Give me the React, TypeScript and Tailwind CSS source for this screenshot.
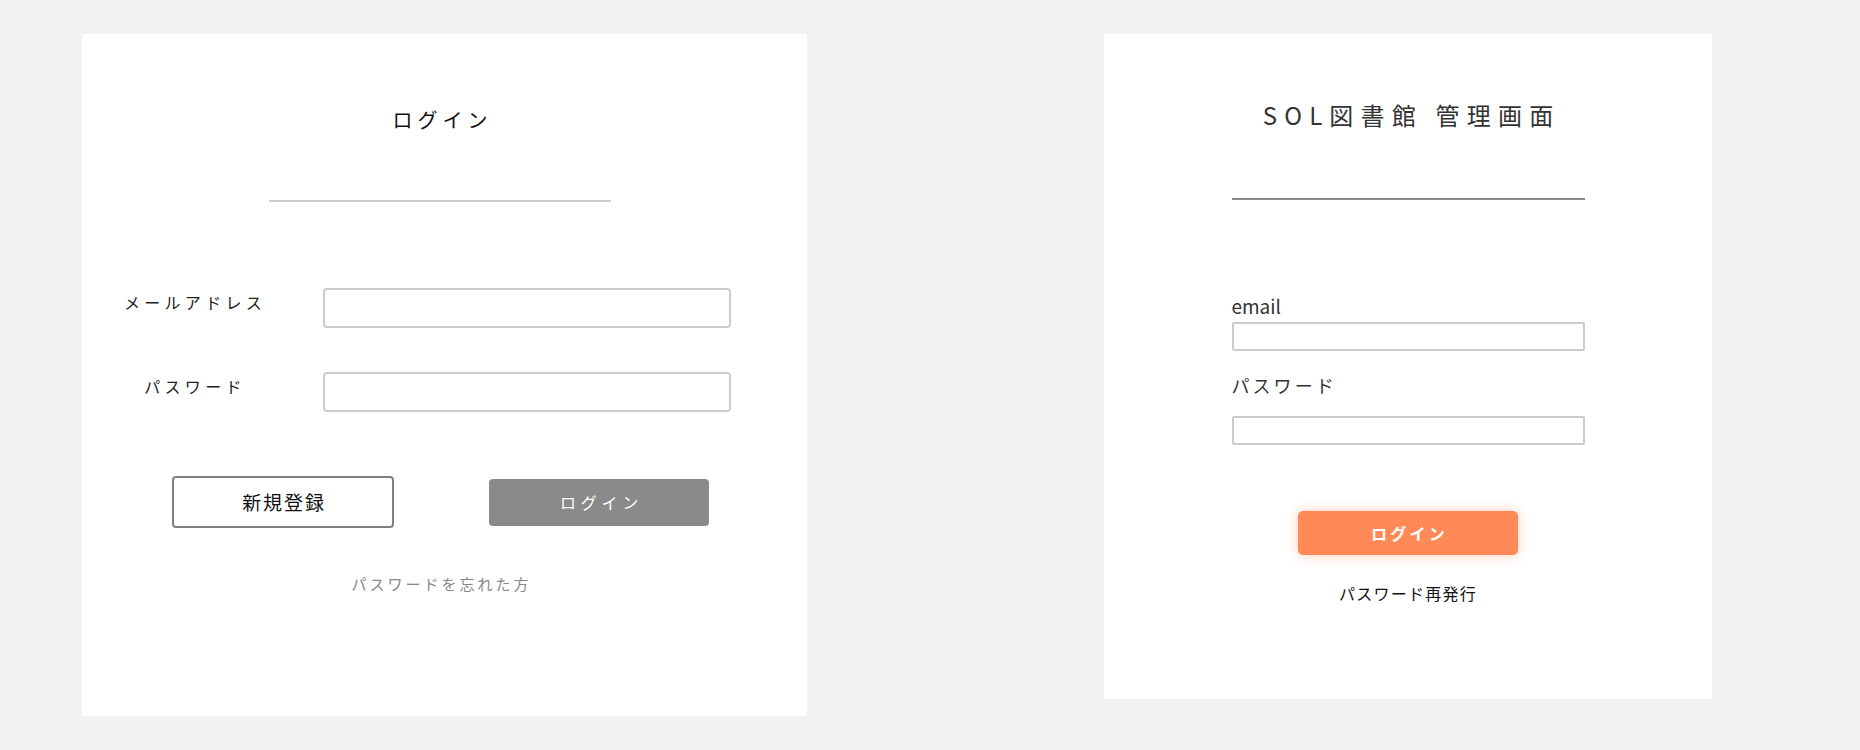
import React from "react";

const jp = "font-['Noto_Sans_CJK_JP',sans-serif]";

// Left: user login card
const UserLogin: React.FC = () => (
  <div className="flex h-[682px] w-[725px] flex-col bg-white pr-[9px] pt-[71px]">
    <h1 className="text-center text-[20px] leading-[30px] tracking-[0.25em] text-[#111] pl-[5px]">
      ログイン
    </h1>
    <div className="mx-auto mt-[65px] h-[2px] w-[342px] bg-[#cccccc]" />

    <div className="mt-[86px] flex flex-col gap-[44px]">
      <div className="flex items-start">
        <label className="ml-[31px] w-[160px] text-center text-[16px] leading-[28px] tracking-[0.27em] text-[#222] pl-[4px]">
          メールアドレス
        </label>
        <input
          type="email"
          className="ml-[50px] h-[40px] w-[408px] rounded-[4px] border-2 border-[#cccccc] bg-white outline-none"
        />
      </div>
      <div className="flex items-start">
        <label className="ml-[31px] w-[160px] text-center text-[16px] leading-[28px] tracking-[0.27em] text-[#222] pl-[4px]">
          パスワード
        </label>
        <input
          type="password"
          className="ml-[50px] h-[40px] w-[408px] rounded-[4px] border-2 border-[#cccccc] bg-white outline-none"
        />
      </div>
    </div>

    <div className="mt-[64px] flex items-center gap-[95px] pl-[90px]">
      <button className="h-[52px] w-[222px] rounded-[4px] border-2 border-[#808080] bg-white text-[19px] tracking-[0.1em] text-[#111] pl-[2px]">
        新規登録
      </button>
      <button className="h-[47px] w-[220px] rounded-[4px] bg-[#8a8a8a] text-[16px] tracking-[0.3em] text-white pl-[5px]">
        ログイン
      </button>
    </div>

    <p className="mt-[44px] text-center text-[15px] leading-[24px] tracking-[0.2em] text-[#888] pl-[3px]">
      パスワードを忘れた方
    </p>
  </div>
);

// Right: admin login card
const AdminLogin: React.FC = () => (
  <div className="flex h-[665px] w-[608px] flex-col items-center bg-white pt-[65px]">
    <h1 className="text-[24px] leading-[32px] tracking-[0.3em] text-[#333] pl-[7px]">
      SOL図書館 管理画面
    </h1>
    <div className="mt-[67px] h-[2px] w-[353px] bg-[#8a8a8a]" />

    <div className="mt-[94px] flex w-[353px] flex-col">
      <label className="text-[19px] leading-[24px] text-[#333]">email</label>
      <input
        type="email"
        className="mt-[4px] h-[29px] w-full rounded-[2px] border-2 border-[#cccccc] bg-white outline-none"
      />
      <label className="mt-[22px] text-[18px] leading-[24px] tracking-[0.17em] text-[#333]">
        パスワード
      </label>
      <input
        type="password"
        className="mt-[19px] h-[29px] w-full rounded-[2px] border-2 border-[#cccccc] bg-white outline-none"
      />
    </div>

    <button className="mt-[66px] h-[44px] w-[220px] rounded-[5px] bg-[#ff8a57] text-[16px] font-bold tracking-[0.2em] text-white shadow-[0_0_12px_rgba(255,138,87,0.45)] pl-[3px]">
      ログイン
    </button>
    <p className="mt-[26px] text-[16px] leading-[24px] tracking-[0.08em] text-[#111]">
      パスワード再発行
    </p>
  </div>
);

export default function App() {
  return (
    <div className={`${jp} flex min-h-screen items-start gap-[297px] bg-[#f2f2f2] pl-[82px] pt-[34px]`}>
      <UserLogin />
      <AdminLogin />
    </div>
  );
}
